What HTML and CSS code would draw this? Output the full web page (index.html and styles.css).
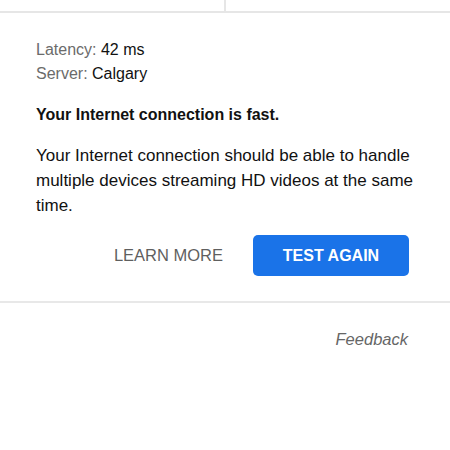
FILE: index.html
```html
<!DOCTYPE html>
<html>
<head>
<meta charset="utf-8">
<link rel="stylesheet" href="styles.css">
</head>
<body>
<div class="tabs">
  <div class="tab"></div>
  <div class="tab"></div>
</div>
<section class="result">
  <div class="stats">
    <div><span class="label">Latency:</span> 42 ms</div>
    <div><span class="label">Server:</span> Calgary</div>
  </div>
  <p class="headline">Your Internet connection is fast.</p>
  <p class="desc">Your Internet connection should be able to handle multiple devices streaming HD videos at the same time.</p>
  <div class="actions">
    <button class="btn-text">LEARN MORE</button>
    <button class="btn-primary">TEST AGAIN</button>
  </div>
</section>
<footer class="footer">
  <a class="feedback">Feedback</a>
</footer>
</body>
</html>
```
FILE: styles.css
```css
* { box-sizing: border-box; }
html, body { margin: 0; padding: 0; background: #fff; }
body {
  font-family: "Liberation Sans", Arial, sans-serif;
  color: #111;
  width: 450px;
}
.tabs {
  display: flex;
  height: 13px;
  border-bottom: 2px solid #e6e6e6;
}
.tab { flex: 1; }
.tab + .tab { border-left: 2px solid #e6e6e6; }
.result {
  padding: 25px 36px 25px 36px;
  border-bottom: 2px solid #e8e8e8;
}
.stats { font-size: 16px; line-height: 24px; }
.label { color: #6b6b6b; }
.headline {
  margin: 18px 0 0 0;
  font-size: 16px;
  font-weight: bold;
  line-height: 22px;
}
.desc {
  margin: 17px 0 0 0;
  font-size: 17px;
  line-height: 25px;
}
.actions {
  display: flex;
  justify-content: flex-end;
  align-items: center;
  gap: 30px;
  margin-top: 17px;
  padding-right: 5px;
}
.btn-text {
  background: none;
  border: 0;
  font: inherit;
  font-size: 16.5px;
  color: #5f5f5f;
  padding: 0;
}
.btn-primary {
  background: #1a73e8;
  color: #fff;
  border: 0;
  border-radius: 5px;
  font: inherit;
  font-size: 16px;
  font-weight: bold;
  width: 156px;
  height: 41px;
}
.footer {
  display: flex;
  justify-content: flex-end;
  padding: 27px 42px;
}
.feedback {
  font-style: italic;
  font-size: 16.5px;
  color: #666;
}
```
